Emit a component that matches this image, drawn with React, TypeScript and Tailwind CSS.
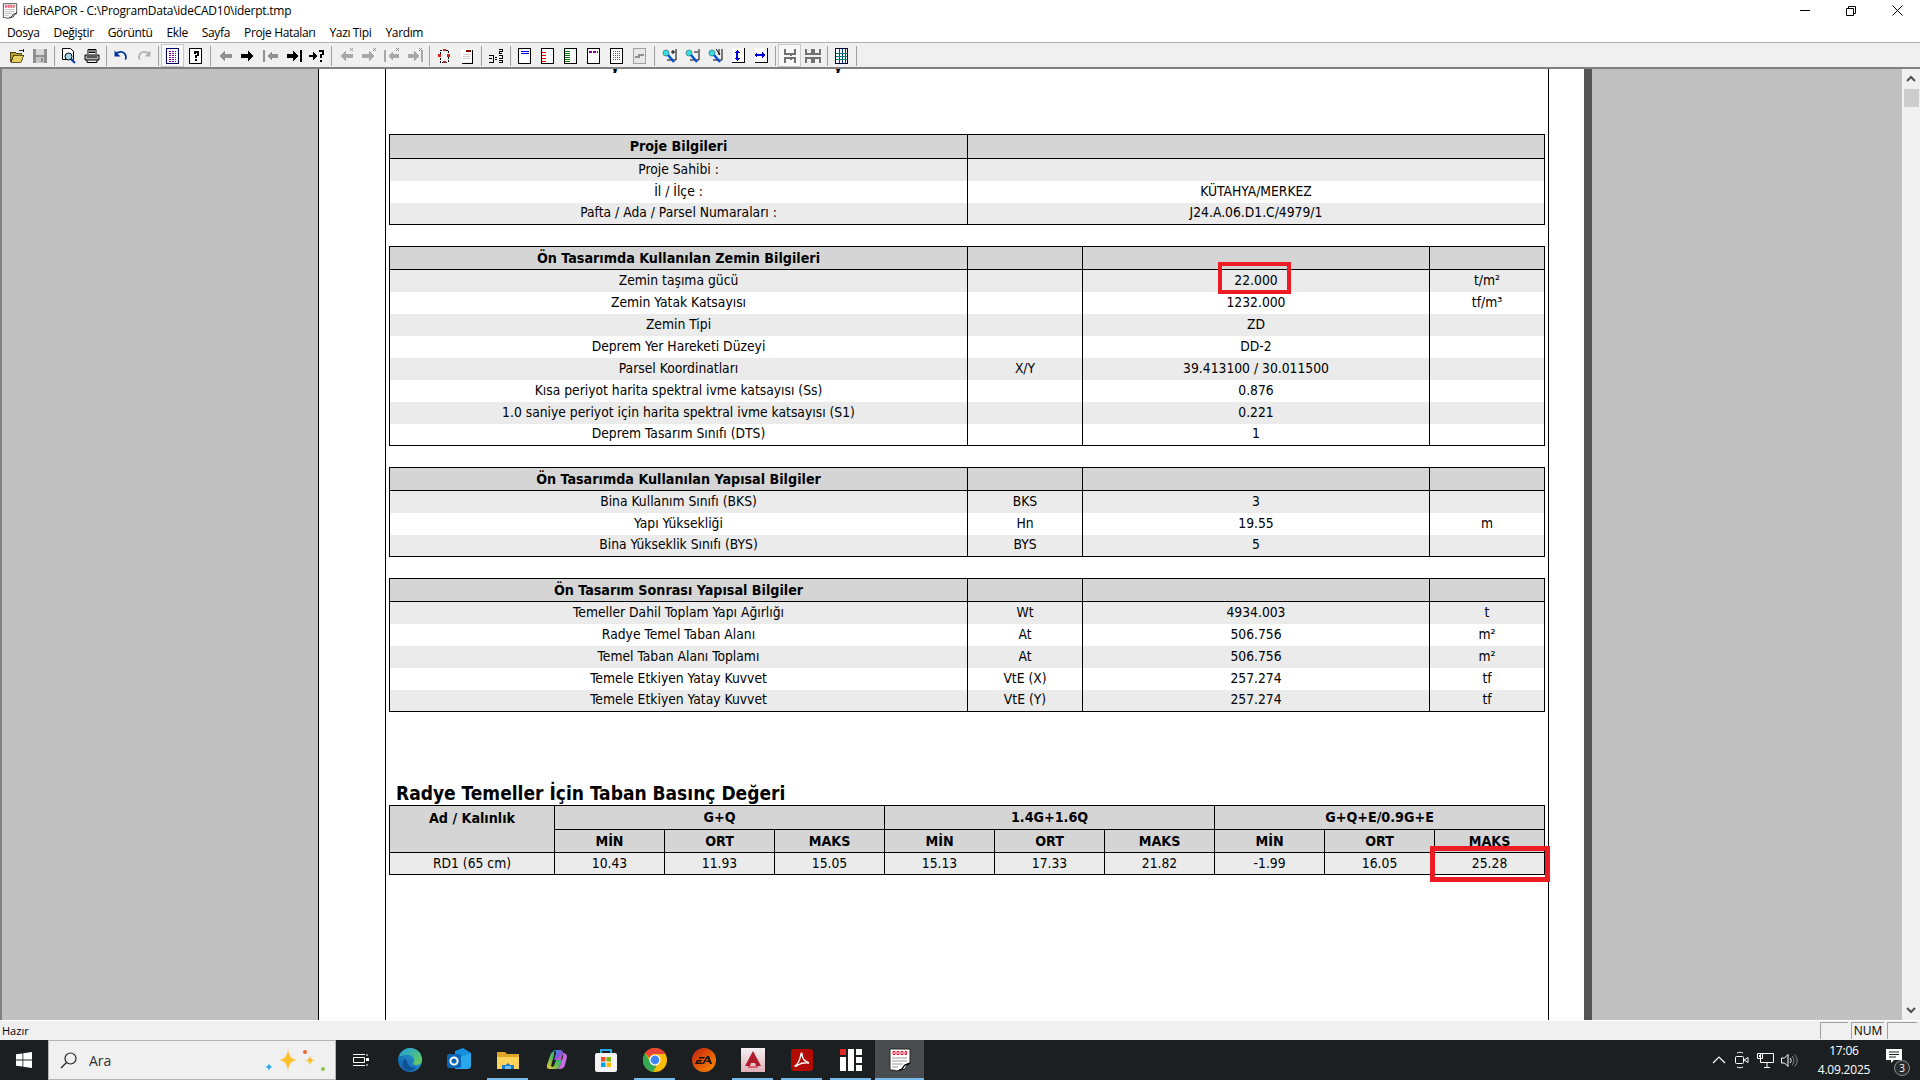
import React from 'react'

type Row = string[]

interface SectionProps {
  title: string
  rows: Row[]
  cols: number[]
  mark?: number
}

const sections: { title: string; rows: Row[] }[] = [
  {
    title: 'Ön Tasarımda Kullanılan Zemin Bilgileri',
    rows: [
      ['Zemin taşıma gücü', '', '22.000', 't/m²'],
      ['Zemin Yatak Katsayısı', '', '1232.000', 'tf/m³'],
      ['Zemin Tipi', '', 'ZD', ''],
      ['Deprem Yer Hareketi Düzeyi', '', 'DD-2', ''],
      ['Parsel Koordinatları', 'X/Y', '39.413100 / 30.011500', ''],
      ['Kısa periyot harita spektral ivme katsayısı (Ss)', '', '0.876', ''],
      ['1.0 saniye periyot için harita spektral ivme katsayısı (S1)', '', '0.221', ''],
      ['Deprem Tasarım Sınıfı (DTS)', '', '1', ''],
    ],
  },
  {
    title: 'Ön Tasarımda Kullanılan Yapısal Bilgiler',
    rows: [
      ['Bina Kullanım Sınıfı (BKS)', 'BKS', '3', ''],
      ['Yapı Yüksekliği', 'Hn', '19.55', 'm'],
      ['Bina Yükseklik Sınıfı (BYS)', 'BYS', '5', ''],
    ],
  },
  {
    title: 'Ön Tasarım Sonrası Yapısal Bilgiler',
    rows: [
      ['Temeller Dahil Toplam Yapı Ağırlığı', 'Wt', '4934.003', 't'],
      ['Radye Temel Taban Alanı', 'At', '506.756', 'm²'],
      ['Temel Taban Alanı Toplamı', 'At', '506.756', 'm²'],
      ['Temele Etkiyen Yatay Kuvvet', 'VtE (X)', '257.274', 'tf'],
      ['Temele Etkiyen Yatay Kuvvet', 'VtE (Y)', '257.274', 'tf'],
    ],
  },
]

const InfoTable: React.FC<SectionProps> = ({ title, rows, cols, mark }) => (
  <table className="table-fixed border-collapse w-[1155px] border border-black text-[13.75px] text-black">
    <colgroup>
      {cols.map((c, i) => (
        <col key={i} style={{ width: c }} />
      ))}
    </colgroup>
    <tbody>
      <tr className="h-[23px] bg-[#d5d5d5] border-b border-black">
        <td className="text-center font-bold text-[14.2px] p-0 leading-none">{title}</td>
        {cols.slice(1).map((_, i) => (
          <td key={i} className="border-l border-black p-0" />
        ))}
      </tr>
      {rows.map((row, r) => (
        <tr key={r} className={`h-[22px] ${r % 2 === 0 ? 'bg-[#ebebeb]' : 'bg-white'}`}>
          {row.map((cell, c) => (
            <td key={c} className={`relative text-center p-0 leading-none ${c > 0 ? 'border-l border-black' : ''}`}>
              {cell}
              {mark === r && c === 2 && (
                <div className="absolute left-[135px] top-[-8px] w-[73px] h-[32px] border-4 border-[#ed1c24]" />
              )}
            </td>
          ))}
        </tr>
      ))}
    </tbody>
  </table>
)

const PressureTable = () => {
  const values = ['10.43', '11.93', '15.05', '15.13', '17.33', '21.82', '-1.99', '16.05', '25.28']
  const subs = ['MİN', 'ORT', 'MAKS', 'MİN', 'ORT', 'MAKS', 'MİN', 'ORT', 'MAKS']
  return (
    <table className="table-fixed border-collapse w-[1155px] border border-black text-[13.75px] text-black">
      <colgroup>
        <col style={{ width: 165 }} />
        {values.map((_, i) => (
          <col key={i} style={{ width: 110 }} />
        ))}
      </colgroup>
      <tbody>
        <tr className="h-[24px] bg-[#d5d5d5] font-bold text-[14.2px] leading-none">
          <td rowSpan={2} className="align-top text-center pt-[5px] p-0">
            Ad / Kalınlık
          </td>
          {['G+Q', '1.4G+1.6Q', 'G+Q+E/0.9G+E'].map((h) => (
            <td key={h} colSpan={3} className="text-center p-0 border-l border-b border-black">
              {h}
            </td>
          ))}
        </tr>
        <tr className="h-[23px] bg-[#d5d5d5] font-bold text-[14.2px] leading-none border-b border-black">
          {subs.map((s, i) => (
            <td key={i} className="text-center p-0 border-l border-black">
              {s}
            </td>
          ))}
        </tr>
        <tr className="h-[22px] bg-[#ebebeb] leading-none">
          <td className="text-center p-0">RD1 (65 cm)</td>
          {values.map((v, i) => (
            <td key={i} className="relative text-center p-0 border-l border-black">
              {v}
              {i === 8 && (
                <div className="absolute left-[-5px] top-[-7px] w-[120px] h-[36px] border-[5px] border-[#ed1c24]" />
              )}
            </td>
          ))}
        </tr>
      </tbody>
    </table>
  )
}

/* ---------- toolbar icons ---------- */

const Svg: React.FC<{ children: React.ReactNode; size?: number }> = ({ children, size = 16 }) => (
  <svg width={size} height={size} viewBox="0 0 16 16" shapeRendering="crispEdges">
    {children}
  </svg>
)

const arrowR = '1,6 8,6 8,3 14,8 8,13 8,10 1,10'
const arrowL = '15,6 8,6 8,3 2,8 8,13 8,10 15,10'

const XMark = () => <path d="M12 0l3 3M15 0l-3 3" stroke="#909090" fill="none" />

const ArrowIcon: React.FC<{ d: 'l' | 'r' | 'fl' | 'fr' | 'q'; color: string; x?: boolean }> = ({ d, color, x }) => (
  <Svg>
    {d === 'l' && <polygon points={arrowL} fill={color} />}
    {d === 'r' && <polygon points={arrowR} fill={color} />}
    {d === 'fl' && (
      <>
        <rect x="0" y="2" width="2" height="12" fill={color} />
        <polygon points="15,6 9,6 9,3 4,8 9,13 9,10 15,10" fill={color} />
      </>
    )}
    {d === 'fr' && (
      <>
        <rect x="14" y="2" width="2" height="12" fill={color} />
        <polygon points="1,6 7,6 7,3 12,8 7,13 7,10 1,10" fill={color} />
      </>
    )}
    {d === 'q' && (
      <>
        <polygon points="0,7 4,7 4,4 9,8 4,12 4,9 0,9" fill={color} />
        <path d="M10 4V2h5v5h-2v3h-2V6h2V4zM11 12h2v2h-2z" fill={color} />
      </>
    )}
    {x && <XMark />}
  </Svg>
)

const Page: React.FC<{ children?: React.ReactNode; color?: string }> = ({ children, color = '#000' }) => (
  <Svg>
    <rect x="1.5" y="0.5" width="12" height="15" fill="#fff" stroke={color} />
    {children}
  </Svg>
)

const OpenIcon = () => (
  <Svg>
    <path d="M1 4h5l1 1h5v2H5L2 13H1z" fill="#b8a030" stroke="#3a3200" strokeWidth="0.8" />
    <path d="M5 7h10l-3 7H2z" fill="#e8d060" stroke="#3a3200" strokeWidth="0.8" />
    <path d="M10 2h4l1 2M14 1v3" stroke="#000" fill="none" strokeWidth="0.8" />
  </Svg>
)

const SaveIcon = () => (
  <Svg>
    <rect x="1" y="1" width="14" height="14" fill="#8e8e8e" />
    <rect x="4" y="1" width="8" height="6" fill="#d8d8d8" />
    <rect x="4" y="9" width="8" height="6" fill="#c4c4c4" />
    <rect x="9" y="10" width="2" height="4" fill="#8e8e8e" />
  </Svg>
)

const PreviewIcon = () => (
  <svg width="16" height="16" viewBox="0 0 16 16">
    <path d="M1.5.5h8l3 3v8h-11z" fill="#fff" stroke="#000" />
    <circle cx="7.5" cy="8.5" r="3.5" fill="#a8d8e8" stroke="#000" />
    <path d="M10 11l4 4" stroke="#0038a8" strokeWidth="2" />
  </svg>
)

const PrintIcon = () => (
  <svg width="16" height="16" viewBox="0 0 16 16">
    <path d="M4 6V1.5h8V6" fill="#fff" stroke="#000" />
    <path d="M1 7h14v5H1z" fill="#b0b0b0" stroke="#000" />
    <path d="M3 12v2.5h10V12M5 3h6M5 4.5h6M3 9h10" stroke="#000" fill="none" />
  </svg>
)

const UndoIcon: React.FC<{ color: string; flip?: boolean }> = ({ color, flip }) => (
  <svg width="16" height="16" viewBox="0 0 16 16">
    <g transform={flip ? 'translate(16 0) scale(-1 1)' : undefined}>
      <path d="M3 5.5c4-3 9-2 10 3 .2 1 0 2-.8 3" fill="none" stroke={color} strokeWidth="1.7" />
      <path d="M1.5 2.5v6h6z" fill={color} />
    </g>
  </svg>
)

const ListIcon = () => (
  <Page color="#000060">
    <path d="M4 3h7M4 5h7M4 7h7M4 9h7M4 11h7M4 13h7" stroke="#7a0090" strokeDasharray="2 1" />
  </Page>
)

const HelpIcon = () => (
  <Page>
    <path d="M5 6V3h5v5H8v2H6V7h2V5H7v1zM6 11h2v2H6z" fill="#000" transform="translate(0.5 0)" />
  </Page>
)

const FrameIcon = () => (
  <Svg>
    <path d="M4 2h8v12H4z" fill="#f4f4f4" stroke="#000" strokeDasharray="2 1" />
    <rect x="7" y="1" width="3" height="2" fill="#d02020" />
    <rect x="2" y="6" width="3" height="3" fill="#d02020" />
    <rect x="11" y="6" width="3" height="3" fill="#d02020" />
    <rect x="7" y="13" width="3" height="2" fill="#d02020" />
  </Svg>
)

const NoteIcon = () => (
  <Svg>
    <rect x="2" y="1" width="11" height="13" fill="#fff" />
    <rect x="7" y="2" width="5" height="2" fill="#800000" />
    <path d="M4 6h7M4 8h7M4 10h7" stroke="#d0d0d0" />
    <path d="M13 2v13H3" stroke="#000" fill="none" />
  </Svg>
)

const NumbersIcon = () => (
  <Svg>
    <path d="M1 7h4v7H1M1 10h3M7 9h2M7 11h2M11 1h3v2h-3v2h3M11 7h3v3h-3M11 12h3v2h-3" stroke="#000" fill="none" />
  </Svg>
)

const MarginIcon: React.FC<{ kind: string }> = ({ kind }) => (
  <Page color="#000">
    {kind === 'top' && <path d="M4 3h8M4 5h8" stroke="#0000e0" />}
    {kind === 'left' && <path d="M2 4h4M2 7h4M2 10h4M2 13h4" stroke="#e00000" />}
    {kind === 'right' && <path d="M2 3h5M2 5h5M2 7h5M2 9h5M2 11h5M2 13h5" stroke="#008000" />}
    {kind === 'dash' && <path d="M3 4h9" stroke="#800090" strokeWidth="2" strokeDasharray="3 1" />}
    {kind === 'grid' && <path d="M4 3h8M4 5h8M4 7h8M4 9h8M4 11h8" stroke="#008080" strokeDasharray="1 1" />}
  </Page>
)

const StepIcon = () => (
  <Svg>
    <rect x="1.5" y="0.5" width="12" height="15" fill="#e8e8e8" stroke="#a0a0a0" />
    <path d="M3 9h4V7h4v-1" stroke="#909090" strokeWidth="2" fill="none" />
  </Svg>
)

const ZoomIcon: React.FC<{ sign: string }> = ({ sign }) => (
  <svg width="16" height="16" viewBox="0 0 16 16">
    <path d="M15 1v11H6" fill="none" stroke="#000" />
    <path d={sign === '+' ? 'M10 4h4M12 2v4' : sign === '-' ? 'M10 4h4' : 'M9 1l4 6M12 1v6'} stroke="#000" fill="none" />
    <circle cx="5" cy="5" r="3" fill="#30e0e0" stroke="#509090" />
    <path d="M7 7l6 7" stroke="#0050d0" strokeWidth="2.4" />
  </svg>
)

const FitIcon: React.FC<{ vert?: boolean }> = ({ vert }) => (
  <Svg>
    <rect x="2" y="0" width="12" height="14" fill="#fff" />
    <path d="M14.5 0v14.5H2" fill="none" stroke="#000" />
    {vert ? (
      <path d="M7 2l-3 3h2v5H4l3 3 3-3H8V5h2z" fill="#0000e0" />
    ) : (
      <path d="M1 7l3-3v2h5V4l3 3-3 3V8H4v2z" fill="#0000e0" />
    )}
  </Svg>
)

const OnePageIcon = () => (
  <Svg>
    <path d="M3 1v5h10V1M3 15v-5h10v5M9 6v2M9 10v2" stroke="#707070" fill="none" strokeWidth="1.2" />
  </Svg>
)

const TwoPageIcon = () => (
  <Svg>
    <path d="M1 1v5h6V1M9 1v5h6V1M1 15v-5h6v5M9 15v-5h6v5" stroke="#707070" fill="none" strokeWidth="1.2" />
  </Svg>
)

const GridPageIcon = () => (
  <Page color="#000040">
    <path d="M5 1v14M8 1v14M11 1v14" stroke="#004080" />
    <path d="M2 5h11M2 8h11M2 11h11" stroke="#008080" />
  </Page>
)

type Tool = { el?: React.ReactNode; on?: boolean; sep?: boolean }

const toolbar: Tool[] = [
  { el: <OpenIcon /> },
  { el: <SaveIcon /> },
  { sep: true },
  { el: <PreviewIcon /> },
  { el: <PrintIcon /> },
  { sep: true },
  { el: <UndoIcon color="#0030a0" /> },
  { el: <UndoIcon color="#b0b0b0" flip /> },
  { sep: true },
  { el: <ListIcon />, on: true },
  { el: <HelpIcon /> },
  { sep: true },
  { el: <ArrowIcon d="l" color="#909090" /> },
  { el: <ArrowIcon d="r" color="#000" /> },
  { el: <ArrowIcon d="fl" color="#909090" /> },
  { el: <ArrowIcon d="fr" color="#000" /> },
  { el: <ArrowIcon d="q" color="#000" /> },
  { sep: true },
  { el: <ArrowIcon d="l" color="#a8a8a8" x /> },
  { el: <ArrowIcon d="r" color="#a8a8a8" x /> },
  { el: <ArrowIcon d="fl" color="#a8a8a8" x /> },
  { el: <ArrowIcon d="fr" color="#a8a8a8" x /> },
  { sep: true },
  { el: <FrameIcon /> },
  { el: <NoteIcon /> },
  { sep: true },
  { el: <NumbersIcon /> },
  { sep: true },
  { el: <MarginIcon kind="top" /> },
  { el: <MarginIcon kind="left" /> },
  { el: <MarginIcon kind="right" /> },
  { el: <MarginIcon kind="dash" /> },
  { el: <MarginIcon kind="grid" /> },
  { el: <StepIcon /> },
  { sep: true },
  { el: <ZoomIcon sign="+" /> },
  { el: <ZoomIcon sign="-" /> },
  { el: <ZoomIcon sign="1" /> },
  { el: <FitIcon vert /> },
  { el: <FitIcon /> },
  { sep: true },
  { el: <OnePageIcon />, on: true },
  { el: <TwoPageIcon /> },
  { sep: true },
  { el: <GridPageIcon /> },
  { sep: true },
]

/* ---------- taskbar icons ---------- */

const TaskIcon: React.FC<{ children: React.ReactNode; w?: string; run?: string; active?: boolean }> = ({
  children,
  w = 'w-[49px]',
  run,
  active,
}) => (
  <div className={`relative ${w} h-full flex items-center justify-center ${active ? 'bg-[#4a4d50]' : ''}`}>
    {children}
    {run && <div className={`absolute bottom-0 h-[2px] bg-[#76b9ed] ${run}`} />}
  </div>
)

const EdgeIcon = () => (
  <svg width="24" height="24" viewBox="0 0 24 24">
    <defs>
      <linearGradient id="edgeA" x1="0" y1="1" x2="1" y2="0">
        <stop offset="0" stopColor="#0c59a4" />
        <stop offset="1" stopColor="#2fa8e0" />
      </linearGradient>
      <linearGradient id="edgeB" x1="0" y1="0" x2="1" y2="1">
        <stop offset="0" stopColor="#1b9de2" />
        <stop offset="1" stopColor="#6ed24f" />
      </linearGradient>
    </defs>
    <circle cx="12" cy="12" r="12" fill="url(#edgeA)" />
    <path d="M1 9C3 3 8 0 12 0c7 0 12 5 12 12 0 3-3 5-6 5-2 0-3-1-3-2 1-1 2-2 1-4-1-3-5-5-8-4-3 0-6 1-7 2z" fill="url(#edgeB)" />
    <path d="M9 13c0 5 5 8 9 6-3 4-9 5-12 1-2-3-2-7 1-9 1 0 2 1 2 2z" fill="#0f4f96" />
  </svg>
)

const OutlookIcon = () => (
  <svg width="24" height="24" viewBox="0 0 24 24">
    <path d="M8 3l8-3 8 5v12a4 4 0 0 1-4 4H8z" fill="#1490df" />
    <path d="M8 11l16-6v12a4 4 0 0 1-4 4H8z" fill="#28a8ea" />
    <rect x="0" y="6" width="14" height="14" rx="2" fill="#0a64b4" />
    <circle cx="7" cy="13" r="3.6" fill="none" stroke="#fff" strokeWidth="2" />
  </svg>
)

const FolderIcon = () => (
  <svg width="24" height="24" viewBox="0 0 24 24">
    <path d="M1 4h8l2 2h12v15H1z" fill="#e0a526" />
    <path d="M1 9h22v12H1z" fill="#fbd25a" />
    <path d="M6 21v-4h4l2-2 2 2h4v4z" fill="#1a78c8" />
    <path d="M9 21v-3h6v3z" fill="#6ec0f0" />
  </svg>
)

const CopilotIcon = () => (
  <svg width="24" height="24" viewBox="0 0 24 24">
    <defs>
      <linearGradient id="copA" x1="0" y1="0" x2="1" y2="1">
        <stop offset="0" stopColor="#1aa0d8" />
        <stop offset="0.5" stopColor="#7a5ce0" />
        <stop offset="1" stopColor="#e060b0" />
      </linearGradient>
      <linearGradient id="copB" x1="0" y1="1" x2="1" y2="0">
        <stop offset="0" stopColor="#f4c430" />
        <stop offset="0.5" stopColor="#50b860" />
        <stop offset="1" stopColor="#1aa0d8" />
      </linearGradient>
    </defs>
    <path d="M8 2h7c2 0 3 1 3 3l-2 7H9l2-7c0-2-1-3-3-3z" fill="url(#copA)" />
    <path d="M10 3C7 3 6 5 5 8L2 17c-.5 3 1 4 3 4h6c2 0 3-1 4-3l2-6-6 0-2 6c-1 1-2 1-3 0l3-11c0-3 0-5 1-5z" fill="url(#copB)" />
    <path d="M18 5c2 0 4 1 4 4l-2 8c-1 3-3 4-5 4H11c2 0 3-1 4-3l3-9c.3-2 0-3 0-4z" fill="#c86ee0" />
  </svg>
)

const StoreIcon = () => (
  <svg width="24" height="24" viewBox="0 0 24 24">
    <path d="M7 6V2h10v4" fill="none" stroke="#2aa8e8" strokeWidth="2" />
    <rect x="1" y="5" width="22" height="19" rx="2" fill="#f4f4f4" />
    <rect x="7" y="9" width="4.5" height="4.5" fill="#f25022" />
    <rect x="12.5" y="9" width="4.5" height="4.5" fill="#7fba00" />
    <rect x="7" y="14.5" width="4.5" height="4.5" fill="#00a4ef" />
    <rect x="12.5" y="14.5" width="4.5" height="4.5" fill="#ffb900" />
  </svg>
)

const ChromeIcon = () => (
  <svg width="24" height="24" viewBox="0 0 24 24">
    <circle cx="12" cy="12" r="12" fill="#fbbc04" />
    <path d="M12 0a12 12 0 0 1 10.4 6H12a6 6 0 0 0-5.6 3.8L2.2 5A12 12 0 0 1 12 0z" fill="#ea4335" />
    <path d="M2.2 5l5.2 9a6 6 0 0 0 6.2 3.8L10 24A12 12 0 0 1 2.2 5z" fill="#34a853" />
    <circle cx="12" cy="12" r="5.6" fill="#fff" />
    <circle cx="12" cy="12" r="4.4" fill="#4285f4" />
  </svg>
)

const EaIcon = () => (
  <svg width="24" height="24" viewBox="0 0 24 24">
    <defs>
      <linearGradient id="eaG" x1="0" y1="0" x2="1" y2="1">
        <stop offset="0" stopColor="#c41e10" />
        <stop offset="1" stopColor="#ff9000" />
      </linearGradient>
    </defs>
    <circle cx="12" cy="12" r="12" fill="url(#eaG)" />
    <path d="M7 9h6l-1 1.500H7zM5 12h5l-.8 1.500H6L5.500 14.500h5L9.500 16H3zM15 8h2l3 8h-2l-1-2h-3l1-1.500h1.500l-1-2.500L12 16h-2z" fill="#111" />
  </svg>
)

const CadIcon = () => (
  <svg width="24" height="24" viewBox="0 0 24 24">
    <defs>
      <linearGradient id="cadG" x1="0" y1="0" x2="0" y2="1">
        <stop offset="0" stopColor="#f4f0f2" />
        <stop offset="1" stopColor="#e0b0b8" />
      </linearGradient>
    </defs>
    <rect width="24" height="24" fill="url(#cadG)" />
    <path d="M12 3l8 15h-5l-1-3h-4l-1 3H4z" fill="#b01c2c" />
    <path d="M7 18h10v2H7z" fill="#d86070" />
  </svg>
)

const AcrobatIcon = () => (
  <svg width="22" height="22" viewBox="0 0 22 22">
    <rect width="22" height="22" rx="3" fill="#b30b00" />
    <path d="M4 17c3-2 5-6 6-12 0-1 1-1 1 0 0 4 2 7 7 9-4-.5-8 0-11 2-2 1.500-3 1.500-3 1z" fill="none" stroke="#fff" strokeWidth="1.400" />
  </svg>
)

const TilesIcon = () => (
  <svg width="22" height="22" viewBox="0 0 22 22">
    <rect x="0" y="0" width="6" height="6" fill="#e02828" />
    <rect x="0" y="8" width="6" height="14" fill="#fff" />
    <rect x="8" y="0" width="6" height="22" fill="#fff" />
    <rect x="16" y="0" width="6" height="6" fill="#fff" />
    <rect x="16" y="8" width="6" height="6" fill="#fff" />
    <rect x="16" y="16" width="6" height="6" fill="#fff" />
  </svg>
)

const DocIcon: React.FC<{ size?: number; dark?: boolean }> = ({ size = 24, dark }) => (
  <svg width={size} height={size} viewBox="0 0 24 24">
    <path d="M2 1h20v15l-3 1-2 4-5 1-3 1-4-1H2z" fill="#fff" stroke={dark ? '#000' : '#222'} strokeWidth="1" />
    <rect x="4" y="3" width="15" height="4" fill="#fff" />
    <path d="M5 3.500h2v3H5zM9 3.500h2v3H9zM13 3.500h2v3h-2zM17 3.500h1.500v3H17z" fill="none" stroke="#e00020" strokeWidth="0.9" />
    <path d="M4 10h15M4 13h15M4 16h11M4 19h6" stroke="#9a9a9a" />
    <path d="M22 15c-2 1-5 1-6 3s-3 4-5 4" fill="none" stroke="#000" strokeWidth="1.300" />
  </svg>
)

const Sparkles = () => (
  <svg width="62" height="28" viewBox="0 0 62 28">
    <path d="M24 2c1 7 3 10 9 11-6 1-8 4-9 11-1-7-3-10-9-11 6-1 8-4 9-11z" fill="#fbc02d" />
    <path d="M46 8c.5 3.500 1.500 5 5 5.500-3.500.5-4.500 2-5 5.500-.5-3.500-1.500-5-5-5.500 3.500-.5 4.500-2 5-5.500z" fill="#fbc02d" />
    <path d="M5 16c.5 2.500 1 3 4 4-3 .5-3.500 1.500-4 4-.5-2.500-1-3.500-4-4 3-1 3.500-1.500 4-4z" fill="#29a9ef" />
    <circle cx="41" cy="5" r="2" fill="#f0622c" />
    <circle cx="59" cy="22" r="2" fill="#8bc34a" />
  </svg>
)

export default function App() {
  return (
    <div className="w-[1920px] h-[1080px] overflow-hidden flex flex-col bg-white text-black font-['Open_Sans','Noto_Sans',sans-serif]">
      {/* title bar */}
      <div className="h-[21px] flex items-center shrink-0">
        <div className="ml-[2px] mr-[5px]">
          <DocIcon size={16} dark />
        </div>
        <span className="text-[12px] leading-none tracking-[-0.24px]">ideRAPOR - C:\ProgramData\ideCAD10\iderpt.tmp</span>
        <div className="ml-auto flex items-center h-full">
          <div className="w-[46px] flex justify-center">
            <div className="w-[10px] h-px bg-black" />
          </div>
          <div className="w-[46px] flex justify-center">
            <svg width="10" height="10" viewBox="0 0 10 10" fill="none" stroke="#000">
              <path d="M.5 2.500h7v7h-7zM2.500 2.500v-2h7v7h-2" />
            </svg>
          </div>
          <div className="w-[46px] flex justify-center">
            <svg width="11" height="11" viewBox="0 0 11 11" fill="none" stroke="#000">
              <path d="M.5.5l10 10M10.500.5l-10 10" />
            </svg>
          </div>
        </div>
      </div>

      {/* menu */}
      <div className="h-[21px] flex items-center shrink-0 pl-[7px] pt-[2px] gap-[14px] text-[12px] leading-none tracking-[-0.35px]">
        {['Dosya', 'Değiştir', 'Görüntü', 'Ekle', 'Sayfa', 'Proje Hataları', 'Yazı Tipi', 'Yardım'].map((m) => (
          <span key={m}>{m}</span>
        ))}
      </div>

      {/* toolbar */}
      <div className="h-[27px] shrink-0 bg-[#f0f0f0] border-t border-[#b0b0b0] border-b-2 border-b-[#808080] flex items-center pl-[5px] pt-[1px]">
        {toolbar.map((t, i) =>
          t.sep ? (
            <div key={i} className="w-px h-[20px] bg-[#a0a0a0] mx-[2.5px]" />
          ) : (
            <div
              key={i}
              className={`w-[23px] h-[23px] flex items-center justify-center ${
                t.on ? 'border border-[#c8c8c8] bg-[#f8f8f8]' : ''
              }`}
            >
              {t.el}
            </div>
          ),
        )}
      </div>

      {/* report viewport */}
      <div className="flex-1 min-h-0 flex">
        <div className="w-[319px] shrink-0 bg-[#c0c0c0] border-l-2 border-l-[#808080] border-r border-r-black" />
        <div className="w-[1265px] shrink-0 bg-white pl-[66px]">
          <div className="w-[1164px] h-full border-x border-black pl-[3px] font-['DejaVu_Sans_Condensed','DejaVu_Sans',sans-serif]">
            <div className="h-[4px] overflow-hidden flex pl-[221px] font-bold text-[17px] leading-none">
              <span className="mt-[-12px]">y</span>
              <span className="mt-[-12px] ml-[213px]">y</span>
            </div>
            <div className="pt-[61px] flex flex-col gap-[21px]">
              <table className="table-fixed border-collapse w-[1155px] border border-black text-[13.75px]">
                <colgroup>
                  <col style={{ width: 578 }} />
                  <col style={{ width: 577 }} />
                </colgroup>
                <tbody>
                  <tr className="h-[24px] bg-[#d5d5d5] border-b border-black">
                    <td className="text-center font-bold text-[14.2px] p-0 leading-none">Proje Bilgileri</td>
                    <td className="border-l border-black p-0" />
                  </tr>
                  {[
                    ['Proje Sahibi :', ''],
                    ['İl / İlçe :', 'KÜTAHYA/MERKEZ'],
                    ['Pafta / Ada / Parsel Numaraları :', 'J24.A.06.D1.C/4979/1'],
                  ].map((row, r) => (
                    <tr key={r} className={`h-[22px] ${r % 2 === 0 ? 'bg-[#ebebeb]' : 'bg-white'}`}>
                      <td className="text-center p-0 leading-none">{row[0]}</td>
                      <td className="text-center p-0 leading-none border-l border-black">{row[1]}</td>
                    </tr>
                  ))}
                </tbody>
              </table>
              {sections.map((s, i) => (
                <InfoTable
                  key={s.title}
                  title={s.title}
                  rows={s.rows}
                  cols={[578, 115, 347, 115]}
                  mark={i === 0 ? 0 : undefined}
                />
              ))}
            </div>
            <h2 className="mt-[69px] ml-[7px] h-[24px] text-[19px] font-bold leading-[24px] text-black">
              Radye Temeller İçin Taban Basınç Değeri
            </h2>
            <PressureTable />
          </div>
        </div>
        <div className="w-[8px] shrink-0 bg-[#555555]" />
        <div className="w-[310px] shrink-0 bg-[#c0c0c0]" />
        {/* scrollbar */}
        <div className="w-[18px] shrink-0 bg-[#f0f0f0] flex flex-col items-center">
          <div className="h-[20px] flex items-center justify-center">
            <svg width="10" height="8" viewBox="0 0 10 8" fill="none" stroke="#505050" strokeWidth="2">
              <path d="M1 6l4-4 4 4" />
            </svg>
          </div>
          <div className="w-[15px] h-[18px] bg-[#cdcdcd]" />
          <div className="mt-auto h-[20px] flex items-center justify-center">
            <svg width="10" height="8" viewBox="0 0 10 8" fill="none" stroke="#505050" strokeWidth="2">
              <path d="M1 2l4 4 4-4" />
            </svg>
          </div>
        </div>
      </div>

      {/* status bar */}
      <div className="h-[20px] shrink-0 bg-[#f0f0f0] border-t border-white flex items-center pl-[2px] text-[11px] leading-none">
        <span>Hazır</span>
        <div className="ml-auto flex items-center gap-[3px] pr-[3px]">
          <div className="w-[28px] h-[17px] border-t border-l border-[#a0a0a0]" />
          <div className="w-[33px] h-[17px] border-t border-l border-[#a0a0a0] flex items-center justify-center text-[12px]">
            NUM
          </div>
          <div className="w-[30px] h-[17px] border-t border-l border-[#a0a0a0]" />
        </div>
      </div>

      {/* taskbar */}
      <div className="h-[40px] shrink-0 bg-[#1c1f22] flex items-stretch text-white">
        <div className="w-[48px] flex items-center justify-center">
          <svg width="16" height="16" viewBox="0 0 16 16" fill="#fff">
            <path d="M0 2.300l6.500-.9v6.200H0zM7.300 1.300L16 0v7.600H7.300zM0 8.400h6.500v6.200L0 13.700zM7.300 8.400H16V16l-8.700-1.200z" />
          </svg>
        </div>
        <div className="w-[288px] bg-[#f0f0f0] border border-[#b4b4b4] flex items-center pl-[11px] text-[#303030]">
          <svg width="17" height="17" viewBox="0 0 17 17" fill="none" stroke="#222" strokeWidth="1.200">
            <circle cx="10.500" cy="6.500" r="5.500" />
            <path d="M6.500 10.500L1 16" />
          </svg>
          <span className="ml-[12px] text-[14px]">Ara</span>
          <div className="ml-auto mr-[9px] mt-[2px]">
            <Sparkles />
          </div>
        </div>
        <div className="w-[49px] flex items-center justify-center">
          <svg width="16" height="16" viewBox="0 0 16 16" fill="none" stroke="#fff">
            <path d="M.5 5.500h11v5H.5zM0 2.500h12M0 13.500h12M14 2v2M14 12v2" />
            <rect x="13" y="6" width="3" height="3" fill="#fff" stroke="none" />
          </svg>
        </div>
        <TaskIcon>
          <EdgeIcon />
        </TaskIcon>
        <TaskIcon>
          <OutlookIcon />
        </TaskIcon>
        <TaskIcon run="left-[4px] w-[41px]">
          <FolderIcon />
        </TaskIcon>
        <TaskIcon>
          <CopilotIcon />
        </TaskIcon>
        <TaskIcon>
          <StoreIcon />
        </TaskIcon>
        <TaskIcon run="left-[4px] w-[41px]">
          <ChromeIcon />
        </TaskIcon>
        <TaskIcon>
          <EaIcon />
        </TaskIcon>
        <TaskIcon run="left-[4px] w-[41px]">
          <CadIcon />
        </TaskIcon>
        <TaskIcon run="left-[4px] w-[41px]">
          <AcrobatIcon />
        </TaskIcon>
        <TaskIcon run="left-[4px] w-[41px]">
          <TilesIcon />
        </TaskIcon>
        <TaskIcon active run="left-0 w-full">
          <DocIcon />
        </TaskIcon>

        {/* tray */}
        <div className="ml-auto flex items-center">
          <svg width="14" height="8" viewBox="0 0 14 8" fill="none" stroke="#fff" strokeWidth="1.200">
            <path d="M1 7l6-6 6 6" />
          </svg>
          <svg className="ml-[8px]" width="16" height="18" viewBox="0 0 16 18" fill="none" stroke="#fff">
            <rect x="1.500" y="5.500" width="8" height="7" rx="1" />
            <path d="M10 9l4-2.500v5L10 9zM3 2c2-1 4-1 6 0M3 16c2 1 4 1 6 0" />
          </svg>
          <svg className="ml-[7px]" width="17" height="15" viewBox="0 0 17 15" fill="none" stroke="#fff">
            <path d="M3.500.5h13v9h-13zM7 14.500h6M10 10v4M.5.5h5v5h-5z" />
            <rect x="2" y="2" width="2" height="2" fill="#fff" stroke="none" />
          </svg>
          <svg className="ml-[7px]" width="17" height="15" viewBox="0 0 17 15" fill="none" stroke="#fff">
            <path d="M.5 5h3L7 1.500v12L3.500 10h-3z" />
            <path d="M9 5c1.500 1.500 1.500 3.500 0 5" />
            <path d="M11 3c2.500 2.500 2.500 6.500 0 9M13.500 1.500c3.500 3.500 3.500 8.500 0 12" stroke="#888" />
          </svg>
          <div className="w-[72px] ml-[10px] flex flex-col items-center text-[12px] leading-[19px] text-white font-['Open_Sans',sans-serif] tracking-[-0.2px]">
            <span>17:06</span>
            <span>4.09.2025</span>
          </div>
          <div className="relative w-[24px] h-[24px] ml-[6px] mr-[10px]">
            <svg width="16" height="14" viewBox="0 0 16 14" className="mt-[1px]">
              <path d="M0 0h16v11H8l-3 3v-3H0z" fill="#fff" />
              <path d="M3 3h10M3 5.500h10M3 8h7" stroke="#1c1f22" />
            </svg>
            <div className="absolute right-0 bottom-[-4px] w-[16px] h-[16px] rounded-full bg-[#2a2d30] border border-[#909090] flex items-center justify-center text-[10px] leading-none">
              3
            </div>
          </div>
        </div>
      </div>
    </div>
  )
}
